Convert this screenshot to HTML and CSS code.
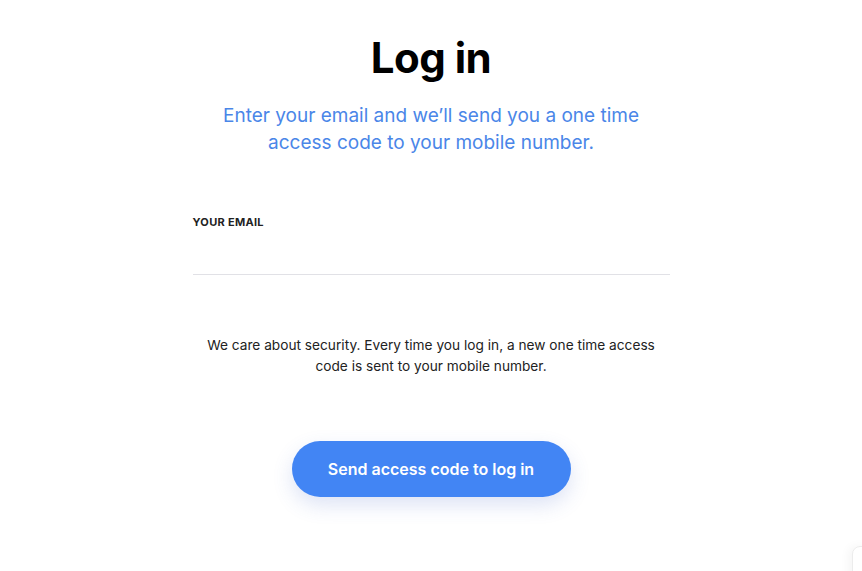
FILE: index.html
```html
<!DOCTYPE html>
<html lang="en">
<head>
    <meta charset="UTF-8">
    <meta content="width=device-width, initial-scale=1.0" name="viewport">
    <title>Log in</title>
    <link rel="stylesheet" href="styles.css">
</head>
<body>
<main class="login">
    <h1 class="login-title">Log in</h1>
    <p class="login-intro">Enter your email and we’ll send you a one time access code to your mobile number.</p>

    <form class="login-form" onsubmit="return false">
        <label class="field-label" for="email">YOUR EMAIL</label>
        <input class="field-input" id="email" type="email">

        <p class="security-note">We care about security. Every time you log in, a new one time access code is sent to your mobile number.</p>

        <button class="send-button" type="submit">Send access code to log in</button>
    </form>
</main>

<div class="corner-card"></div>
</body>
</html>
```

FILE: styles.css
```css
* {
    box-sizing: border-box;
    margin: 0;
    padding: 0;
}

html, body {
    height: 100%;
}

body {
    font-family: Inter, "Noto Sans", sans-serif;
    background-color: white;
    color: #1a1a1a;
    overflow: hidden;
}

.login {
    width: 477px;
    margin: 0 auto;
    padding-top: 30px;
    text-align: center;
}

.login-title {
    font-size: 42px;
    font-weight: 700;
    line-height: 56px;
    color: #000;
    letter-spacing: -0.5px;
}

.login-intro {
    width: 430px;
    margin: 16px auto 0;
    font-size: 19px;
    line-height: 27px;
    color: #4a86e8;
}

.login-form {
    margin-top: 59px;
    text-align: left;
}

.field-label {
    display: block;
    font-size: 11px;
    font-weight: 700;
    letter-spacing: 0.3px;
    color: #222;
}

.field-input {
    display: block;
    width: 100%;
    height: 46px;
    border: none;
    border-bottom: 1px solid #e1e1e6;
    font-family: inherit;
    font-size: 16px;
    outline: none;
}

.security-note {
    width: 460px;
    margin: 60px auto 0;
    font-size: 13.7px;
    line-height: 21px;
    text-align: center;
    color: #222;
}

.send-button {
    display: block;
    width: 279px;
    height: 56px;
    margin: 64px auto 0;
    border: none;
    border-radius: 28px;
    background-color: #4285f4;
    color: white;
    font-family: inherit;
    font-size: 16px;
    font-weight: 600;
    box-shadow: 0 8px 20px rgba(66, 100, 200, 0.18);
    cursor: pointer;
}

.corner-card {
    position: fixed;
    left: 852px;
    top: 546px;
    width: 40px;
    height: 40px;
    border: 1px solid #ececec;
    border-radius: 8px;
    background-color: white;
    box-shadow: -4px 0 10px rgba(0, 0, 0, 0.04);
}
```
